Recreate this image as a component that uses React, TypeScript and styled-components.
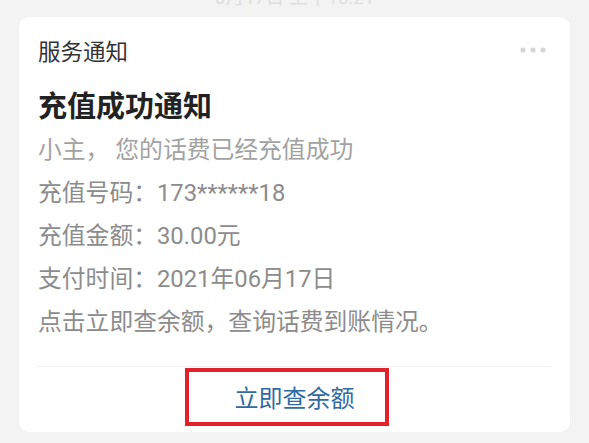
import React from "react";
import styled, {createGlobalStyle} from "styled-components";

const GlobalStyle = createGlobalStyle`
  html, body {
    margin: 0;
    padding: 0;
    background: #f3f3f3;
  }
  body {
    font-family: Roboto, "Noto Sans CJK SC", sans-serif;
  }
`

const Page = styled.div`
  width: 589px;
  height: 443px;
  overflow: hidden;
  box-sizing: border-box;
  padding: 0 19px;
  display: flex;
  flex-direction: column;
`

// time stamp of the message, mostly scrolled out of view
const TimeStamp = styled.div`
  height: 17px;
  line-height: 0;
  margin-top: -2px;
  text-align: center;
  font-size: 19px;
  color: #dedede;
  overflow: hidden;
`

const Card = styled.div`
  background: #ffffff;
  border-radius: 10px;
  margin-top: 2px;
  height: 415px;
  display: flex;
  flex-direction: column;
  padding: 0 19px;
`

const CardHeader = styled.div`
  padding-top: 16px;
  height: 34px;
  display: flex;
  align-items: center;
  justify-content: space-between;
`

const HeaderTitle = styled.span`
  font-size: 22.5px;
  color: #333333;
`

const MoreDots = styled.svg`
  margin-right: 5px;
`

const Title = styled.div`
  margin-top: 20px;
  font-size: 29px;
  line-height: 40px;
  font-weight: 700;
  color: #222222;
`

const Lines = styled.div`
  margin-top: 2px;
  display: flex;
  flex-direction: column;
`

const Line = styled.div<{ $light?: boolean }>`
  font-size: 23.8px;
  line-height: 43px;
  color: ${p => p.$light ? "#a2a2a2" : "#8c8c8c"};
  white-space: pre;
`

const Divider = styled.div`
  margin-top: 22px;
  height: 1px;
  background: #f0f0f0;
`

const Footer = styled.div`
  position: relative;
  height: 65px;
  display: flex;
  justify-content: center;
`

const ActionLink = styled.span`
  font-size: 24px;
  line-height: 65px;
  color: #2f6aa3;
`

const Highlight = styled.div`
  position: absolute;
  left: 147px;
  top: 1px;
  width: 204px;
  height: 58px;
  box-sizing: border-box;
  border: 4px solid #e1222a;
  pointer-events: none;
`

const rows = [
  "充值号码：173******18",
  "充值金额：30.00元",
  "支付时间：2021年06月17日",
  "点击立即查余额，查询话费到账情况。",
]

export default function App() {
  return (
    <>
      <GlobalStyle/>
      <Page>
        <TimeStamp>6月17日 上午10:21</TimeStamp>
        <Card>
          <CardHeader>
            <HeaderTitle>服务通知</HeaderTitle>
            <MoreDots width="26" height="6" viewBox="0 0 26 6">
              <circle cx="3" cy="3" r="2.6" fill="#d6d6d6"/>
              <circle cx="13" cy="3" r="2.6" fill="#d6d6d6"/>
              <circle cx="23" cy="3" r="2.6" fill="#d6d6d6"/>
            </MoreDots>
          </CardHeader>
          <Title>充值成功通知</Title>
          <Lines>
            <Line $light>小主， 您的话费已经充值成功</Line>
            {rows.map(r => <Line key={r}>{r}</Line>)}
          </Lines>
          <Divider/>
          <Footer>
            <ActionLink>立即查余额</ActionLink>
            <Highlight/>
          </Footer>
        </Card>
      </Page>
    </>
  )
}
